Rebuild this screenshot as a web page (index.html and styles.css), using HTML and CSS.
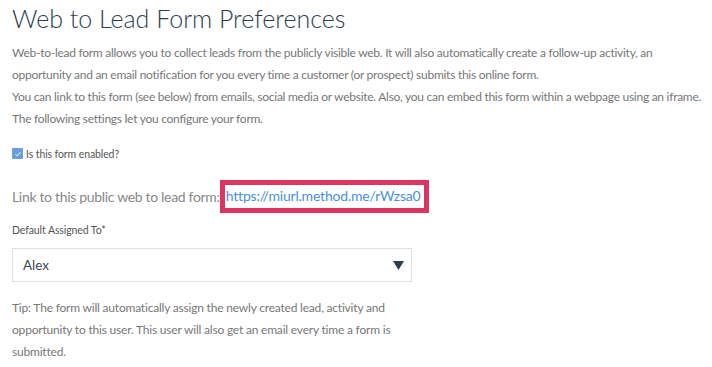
FILE: index.html
```html
<!DOCTYPE html>
<html lang="en">
<head>
<meta charset="utf-8">
<title>Web to Lead Form Preferences</title>
<link rel="stylesheet" href="styles.css">
</head>
<body>
<main class="page">
  <h1 class="title">Web to Lead Form Preferences</h1>
  <div class="intro">
    <p>Web-to-lead form allows you to collect leads from the publicly visible web. It will also automatically create a follow-up activity, an opportunity and an email notification for you every time a customer (or prospect) submits this online form.</p>
    <p>You can link to this form (see below) from emails, social media or website. Also, you can embed this form within a webpage using an iframe.</p>
    <p>The following settings let you configure your form.</p>
  </div>
  <label class="check">
    <span class="box"><svg width="8" height="8" viewBox="0 0 8 8"><path d="M1.5 4.2 L3.2 5.8 L6.5 2.2" fill="none" stroke="#fff" stroke-width="1"/></svg></span>
    <span>Is this form enabled?</span>
  </label>
  <div class="linkrow">
    <span class="linklabel">Link to this public web to lead form:</span><a class="linkbox" href="#">https://miurl.method.me/rWzsa0</a>
  </div>
  <div class="field">
    <div class="fieldlabel">Default Assigned To*</div>
    <div class="select"><span>Alex</span><svg class="arrow" width="11" height="9" viewBox="0 0 11 9"><path d="M0 0 H11 L5.5 9 Z" fill="#2c3e50"/></svg></div>
  </div>
  <p class="tip">Tip: The form will automatically assign the newly created lead, activity and opportunity to this user. This user will also get an email every time a form is submitted.</p>
</main>
</body>
</html>
```
FILE: styles.css
```css
* { box-sizing: border-box; }
html, body { margin: 0; padding: 0; background: #fff; }
body { font-family: Lato, "Open Sans", sans-serif; }
.page { padding: 2px 4px 0 12px; width: 712px; }
.title {
  margin: 0;
  font-weight: 300;
  font-size: 25px;
  line-height: 32px;
  color: #2c3e50;
}
.intro { margin-top: 8px; width: 664px; }
.intro p { margin: 0; font-size: 12px; letter-spacing: -0.27px; line-height: 22px; color: #777; }
.intro p + p { width: 700px; }
.check {
  display: flex; align-items: center; gap: 3px;
  margin-top: 17px; height: 13px;
  font-size: 10.5px; letter-spacing: -0.1px; color: #555;
}
.box {
  width: 11px; height: 11px; background: #6a9fd8; border-radius: 1px;
  display: flex; align-items: center; justify-content: center;
}
.linkrow { margin-top: 20px; display: flex; align-items: center; }
.linklabel { font-size: 14px; letter-spacing: -0.32px; color: #888; }
.linkbox {
  display: inline-block;
  border: 5px solid #dc3562;
  padding: 2px 4px 3px 1px;
  font-size: 14px; letter-spacing: -0.2px; line-height: 18px;
  color: #4a90d9; text-decoration: none;
}
.field { margin-top: 10px; }
.fieldlabel { font-size: 10.5px; letter-spacing: -0.1px; color: #555; line-height: 14px; }
.select {
  margin-top: 11px;
  width: 400px; height: 34px;
  border: 1px solid #dcdfe3;
  display: flex; align-items: center; justify-content: space-between;
  padding: 0 7px 0 10px;
  font-size: 13.5px; color: #3a4a5a;
}
.arrow { display: block; }
.tip {
  margin: 15px 0 0 0; width: 400px;
  font-size: 12px; letter-spacing: -0.2px; line-height: 22px; color: #777;
}
```
